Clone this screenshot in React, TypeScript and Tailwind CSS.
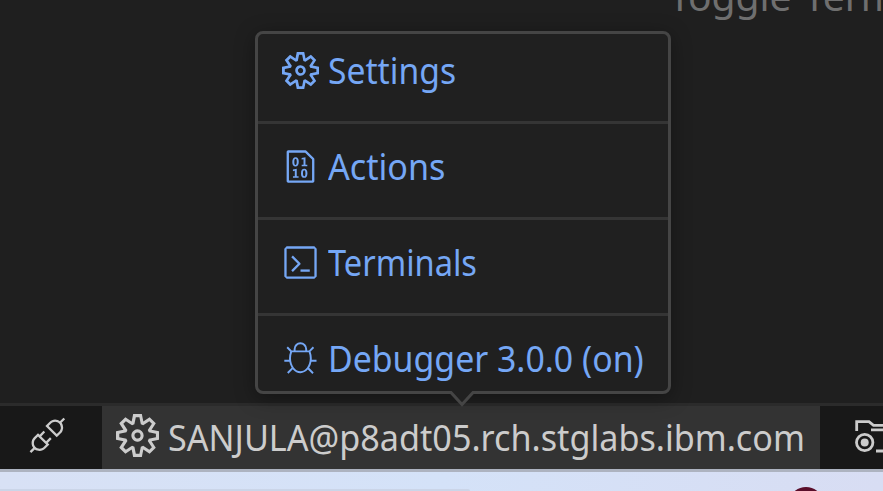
import type { ReactNode } from "react";
import { VscSettingsGear, VscFileBinary, VscTerminal, VscBug, VscDebugDisconnect } from "react-icons/vsc";

function MenuRow({ icon, label, row = "h-24 border-b-[3px] pt-[6px]", scale = "scale-x-[.94]" }: { icon: ReactNode; label: string; row?: string; scale?: string }) {
  return (
    <div className={`flex shrink-0 items-start border-[#353535] pl-6 ${row}`}>
      <span className="mt-[18px] shrink-0">{icon}</span>
      <span className={`ml-[9px] mt-[11px] origin-left whitespace-nowrap text-[36px] leading-[52px] ${scale}`}>{label}</span>
    </div>
  );
}

function FolderRecordIcon() {
  return (
    <svg width="44" height="44" viewBox="0 0 44 44" fill="none" stroke="#cccccc" strokeWidth="2.8" className="shrink-0">
      <path d="M2.7 16V6.7H15L19.5 10.3H43M17 14.8H43M22 36H43" />
      <circle cx="10.7" cy="27.5" r="8.2" />
      <circle cx="10.7" cy="27.5" r="4" fill="#cccccc" stroke="none" />
    </svg>
  );
}

export default function App() {
  return (
    <div className="relative flex h-[491px] w-[883px] flex-col overflow-hidden bg-[#1f1f1f] font-['Noto_Sans',sans-serif]">
      <main className="h-[403px] shrink-0 overflow-hidden pl-[669px]">
        <p className="-mt-[31px] origin-left whitespace-nowrap text-[39px] leading-[54px] [word-spacing:2px] text-[#6f6f6f]">Toggle Terminal</p>
      </main>
      <footer className="flex h-[66px] shrink-0 border-t-[3px] border-[#2b2b2b] bg-[#181818] text-[#cccccc]">
        <div className="flex w-[102px] shrink-0 pl-[27px] pt-[9px]"><VscDebugDisconnect size={42} /></div>
        <div className="flex w-[718px] shrink-0 bg-[#333333] pl-[14px]">
          <VscSettingsGear size={43} className="mt-[8px] shrink-0" />
          <span className="ml-[9px] mt-[6px] origin-left scale-x-[.949] whitespace-nowrap text-[36px] leading-[52px]">SANJULA@p8adt05.rch.stglabs.ibm.com</span>
        </div>
        <div className="flex w-[63px] shrink-0 overflow-hidden pl-[34px] pt-[9px]"><FolderRecordIcon /></div>
      </footer>
      <div className="h-[22px] shrink-0 overflow-hidden border-t-[3px] border-[#adb3c0] bg-linear-to-r from-[#d8e1f5] via-[#d4e2f8] to-[#d8ddf3]">
        <div className="mt-[17px] h-[2px] w-[470px] rounded-tr-xl bg-[#cbd5e8]" />
      </div>
      <div className="absolute left-[791px] top-[487px] h-6 w-[30px] rounded-[50%] bg-[#5a0e2a]" />
      <nav className="absolute left-[255px] top-[31px] flex h-[363px] w-[416px] flex-col rounded-[8px] border-[3px] border-[#454545] bg-[#202020] text-[#75a7f5] shadow-[0_4px_20px_rgba(0,0,0,0.36)]">
        <MenuRow icon={<VscSettingsGear size={37} />} label="Settings" row="h-[90px] border-b-[3px]" scale="scale-x-[.935]" />
        <MenuRow icon={<VscFileBinary size={37} />} label="Actions" scale="scale-x-[.948]" />
        <MenuRow icon={<VscTerminal size={37} />} label="Terminals" scale="scale-x-[.905]" />
        <MenuRow icon={<VscBug size={37} />} label="Debugger 3.0.0 (on)" row="h-[75px] pt-[6px]" />
        <svg className="absolute left-[189px] top-[357px]" width="30" height="18" viewBox="0 0 30 18">
          <path d="M3 0H27V3L15 15L3 3Z" fill="#202020" />
          <path d="M2 1.5H4L15 13.5L26 1.5H28" fill="none" stroke="#454545" strokeWidth="3" />
        </svg>
      </nav>
    </div>
  );
}
